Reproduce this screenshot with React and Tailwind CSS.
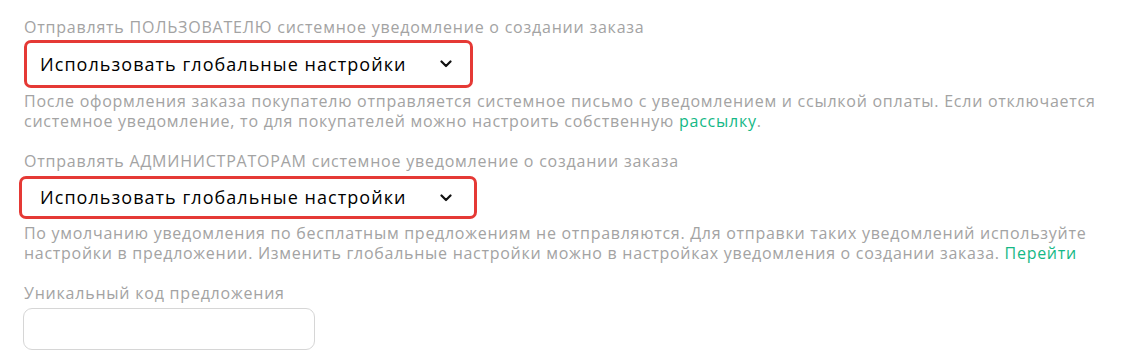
export default function App() {
  const font = { fontFamily: '"Open Sans", "Noto Sans", sans-serif' };
  const Chevron = () => (
    <svg width="12" height="8" viewBox="0 0 12 8" fill="none">
      <path d="M1.5 1.5 L6 6 L10.5 1.5" stroke="#111" strokeWidth="2.2" strokeLinecap="round" strokeLinejoin="round" />
    </svg>
  );
  return (
    <div className="w-[1138px] h-[358px] bg-white overflow-hidden pl-[24px] pt-[16px]" style={font}>
      <div className="text-[16px] leading-[22px] tracking-[0.78px] text-[#a3a3a3]">Отправлять ПОЛЬЗОВАТЕЛЮ системное уведомление о создании заказа</div>
      <div className="mt-[2px] w-[449px] h-[48px] border-[3px] border-[#e53935] rounded-[7px] flex items-center justify-between pl-[13px] pr-[18px]">
        <span className="text-[18px] tracking-[1.05px] text-black">Использовать глобальные настройки</span>
        <Chevron />
      </div>
      <div className="mt-[3px] text-[16px] leading-[20px] tracking-[0.74px] text-[#a3a3a3] w-[1100px]">
        После оформления заказа покупателю отправляется системное письмо с уведомлением и ссылкой оплаты. Если отключается системное уведомление, то для покупателей можно настроить собственную <span className="text-[#14b886]">рассылку</span>.
      </div>
      <div className="mt-[19px] text-[16px] leading-[22px] tracking-[0.78px] text-[#a3a3a3]">Отправлять АДМИНИСТРАТОРАМ системное уведомление о создании заказа</div>
      <div className="mt-[4px] -ml-[5px] w-[458px] h-[43px] border-[3px] border-[#e53935] rounded-[7px] flex items-center justify-between pl-[18px] pr-[22px]">
        <span className="text-[18px] tracking-[1.05px] text-black">Использовать глобальные настройки</span>
        <Chevron />
      </div>
      <div className="mt-[4px] text-[16px] leading-[20px] tracking-[0.72px] text-[#a3a3a3] w-[1100px]">
        По умолчанию уведомления по бесплатным предложениям не отправляются. Для отправки таких уведомлений используйте настройки в предложении. Изменить глобальные настройки можно в настройках уведомления о создании заказа. <span className="text-[#14b886]">Перейти</span>
      </div>
      <div className="mt-[19px] text-[16px] leading-[22px] tracking-[0.78px] text-[#a3a3a3]">Уникальный код предложения</div>
      <div className="mt-[4px] -ml-[1px] w-[292px] h-[42px] border border-[#d6d6d6] rounded-[9px] bg-white"></div>
    </div>
  );
}
